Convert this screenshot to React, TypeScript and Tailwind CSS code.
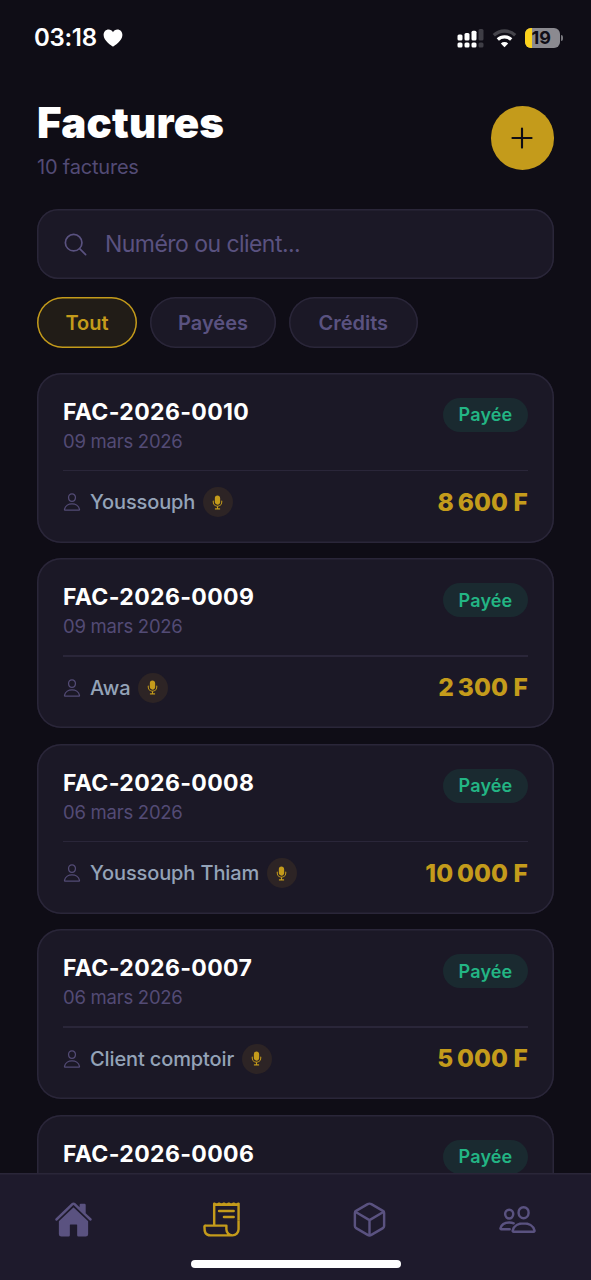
import {
  IoAdd,
  IoCubeOutline,
  IoHome,
  IoMic,
  IoPeopleOutline,
  IoPersonOutline,
  IoReceiptOutline,
  IoSearchOutline,
} from "react-icons/io5";

type Invoice = { number: string; details?: { date: string; client: string; amount: string } };

const invoices: Invoice[] = [
  { number: "FAC-2026-0010", details: { date: "09 mars 2026", client: "Youssouph", amount: "8\u202f600 F" } },
  { number: "FAC-2026-0009", details: { date: "09 mars 2026", client: "Awa", amount: "2\u202f300 F" } },
  { number: "FAC-2026-0008", details: { date: "06 mars 2026", client: "Youssouph Thiam", amount: "10\u202f000 F" } },
  { number: "FAC-2026-0007", details: { date: "06 mars 2026", client: "Client comptoir", amount: "5\u202f000 F" } },
  { number: "FAC-2026-0006" },
];

function StatusBar() {
  return (
    <div className="flex h-[76px] shrink-0 items-center justify-between pl-[34px] pr-[28px]">
      <div className="flex items-center gap-[6px]">
        <span className="text-[24px] leading-none font-semibold tracking-[-0.3px] text-white">03:18</span>
        <svg className="h-[18px] w-[20px]" viewBox="0 0 20 18" fill="#fff">
          <path d="M10 17.6C8.8 16.8.6 11.8.6 5.9.6 2.8 2.9.6 5.5.6 7.5.6 9.2 1.7 10 3.3 10.8 1.7 12.5.6 14.5.6 17.1.6 19.4 2.8 19.4 5.9 19.4 11.8 11.2 16.8 10 17.6Z" />
        </svg>
      </div>
      <div className="flex items-center gap-[8px]">
        <svg className="mt-[1px] h-[20px] w-[27px]" viewBox="0 0 27 20">
          <g fill="#fff">
            <rect x="0.5" y="5.5" width="5" height="6" rx="1.5" />
            <rect x="7.5" y="4" width="5" height="7.5" rx="1.5" />
            <rect x="14.5" y="1.8" width="5" height="9.7" rx="1.5" />
            <rect x="0.5" y="13.5" width="5" height="5" rx="1.5" />
            <rect x="7.5" y="13.5" width="5" height="5" rx="1.5" />
            <rect x="14.5" y="13.5" width="5" height="5" rx="1.5" />
          </g>
          <g fill="#3e3d45">
            <rect x="21.5" y="0" width="5" height="11.5" rx="1.5" />
            <rect x="21.5" y="13.5" width="5" height="5" rx="1.5" />
          </g>
        </svg>
        <svg className="mt-[1px] h-[19px] w-[25px]" viewBox="0 0 25 19" fill="none">
          <path d="M1.8 6.3A15.5 15.5 0 0 1 23.2 6.3" stroke="#45444b" strokeWidth="3.3" />
          <path d="M5.8 10.5A9.7 9.7 0 0 1 19.2 10.5" stroke="#fff" strokeWidth="3.3" />
          <path d="M12.5 18.3L8.8 14.5A5.4 5.4 0 0 1 16.2 14.5Z" fill="#fff" />
        </svg>
        <div className="flex items-center gap-[1.5px]">
          <div className="flex h-[20px] w-[35px] overflow-hidden rounded-[6px] bg-[#8b8a90]">
            <div className="w-[7px] bg-[#fcd21c]" />
            <span className="text-[18px] leading-[20px] font-bold text-[#100e17]">19</span>
          </div>
          <div className="h-[6px] w-[2px] rounded-r-full bg-[#77767c]" />
        </div>
      </div>
    </div>
  );
}

function InvoiceCard({ number, details }: Invoice) {
  return (
    <article className="h-[170px] shrink-0 rounded-[24px] bg-[#1b1826] px-[26px] pt-[25px] shadow-[inset_0_0_0_1.5px_#2a2639]">
      <div className="flex h-[73px] items-start justify-between">
        <div>
          <h2 className="-mt-[1px] text-[23px] leading-[30px] font-bold tracking-[0.36px] text-white">{number}</h2>
          {details && (
            <p className="text-[18.5px] leading-[28px] tracking-[-0.25px] text-[#534b75]">{details.date}</p>
          )}
        </div>
        <span className="flex h-[34px] w-[85px] items-center justify-center rounded-full bg-[#1a2a30] text-[18px] font-semibold tracking-[0.15px] text-[#23b584]">
          Payée
        </span>
      </div>
      {details && (
        <>
          <div className="-mt-[1px] h-[1.5px] bg-[#2a2639]" />
          <div className="flex h-[61.5px] items-center justify-between">
            <div className="flex items-center">
              <IoPersonOutline className="-ml-[1px] size-[20px] text-[#534b75]" />
              <span className="ml-[8px] text-[20px] font-medium tracking-[-0.12px] text-[#94a3b8]">{details.client}</span>
              <span className="ml-[7.5px] flex size-[30px] items-center justify-center rounded-full bg-[#2d2425]">
                <IoMic className="size-[17px] text-[#c49b1b]" />
              </span>
            </div>
            <span className="text-[24.5px] font-extrabold tracking-[0.1px] text-[#c49b1b]">{details.amount}</span>
          </div>
        </>
      )}
    </article>
  );
}

const tabs = [
  { label: "Accueil", Icon: IoHome, active: false },
  { label: "Factures", Icon: IoReceiptOutline, active: true },
  { label: "Produits", Icon: IoCubeOutline, active: false },
  { label: "Clients", Icon: IoPeopleOutline, active: false },
];

export default function App() {
  return (
    <div className="flex h-[1280px] w-[591px] flex-col overflow-hidden bg-[#0f0d16] font-['Inter',sans-serif]">
      <StatusBar />
      <header className="flex h-[133px] shrink-0 justify-between px-[37px] pt-[21px]">
        <div>
          <h1 className="mt-[1px] text-[42px] leading-[50px] font-black tracking-[0.2px] text-white">Factures</h1>
          <p className="mt-[6px] text-[20px] leading-[26px] tracking-[-0.2px] text-[#534b75]">10 factures</p>
        </div>
        <button aria-label="Ajouter" className="mt-[9px] flex size-[63.5px] items-center justify-center rounded-full bg-[#c49b1b] text-[#0f0d15]">
          <IoAdd className="size-[34px]" />
        </button>
      </header>
      <div className="mx-[37px] flex h-[70px] shrink-0 items-center rounded-[21px] bg-[#1b1826] pl-[25px] text-[#5a5280] shadow-[inset_0_0_0_1.5px_#2a2639]">
        <IoSearchOutline className="size-[27px]" />
        <span className="ml-[16px] text-[23px] tracking-[-0.55px]">Numéro ou client...</span>
      </div>
      <div className="mt-[18px] flex shrink-0 gap-[13px] px-[37px] text-[20px] font-semibold">
        <button className="h-[51px] w-[100px] rounded-full bg-[#211c17] text-[#c49b1b] shadow-[inset_0_0_0_1.5px_#c49b1b]">Tout</button>
        <button className="h-[51px] w-[126px] rounded-full bg-[#1b1826] text-[#5a5280] shadow-[inset_0_0_0_1.5px_#2a2639]">Payées</button>
        <button className="h-[51px] w-[128.5px] rounded-full bg-[#1b1826] text-[#5a5280] shadow-[inset_0_0_0_1.5px_#2a2639]">Crédits</button>
      </div>
      <main className="mt-[24.9px] flex min-h-0 flex-1 flex-col gap-[15.5px] overflow-hidden px-[37px]">
        {invoices.map((invoice) => (
          <InvoiceCard key={invoice.number} {...invoice} />
        ))}
      </main>
      <nav className="flex h-[107px] shrink-0 flex-col items-center bg-[#1e1a2c] shadow-[inset_0_1.5px_0_#2a2639]">
        <div className="grid h-[87px] w-full shrink-0 grid-cols-4 place-items-center pt-[5px]">
          {tabs.map(({ label, Icon, active }) => (
            <button key={label} aria-label={label} className={active ? "text-[#c49b1b]" : "text-[#5a5280]"}>
              <Icon className="size-[39px]" />
            </button>
          ))}
        </div>
        <div className="h-[8px] w-[210px] rounded-full bg-white" />
      </nav>
    </div>
  );
}
